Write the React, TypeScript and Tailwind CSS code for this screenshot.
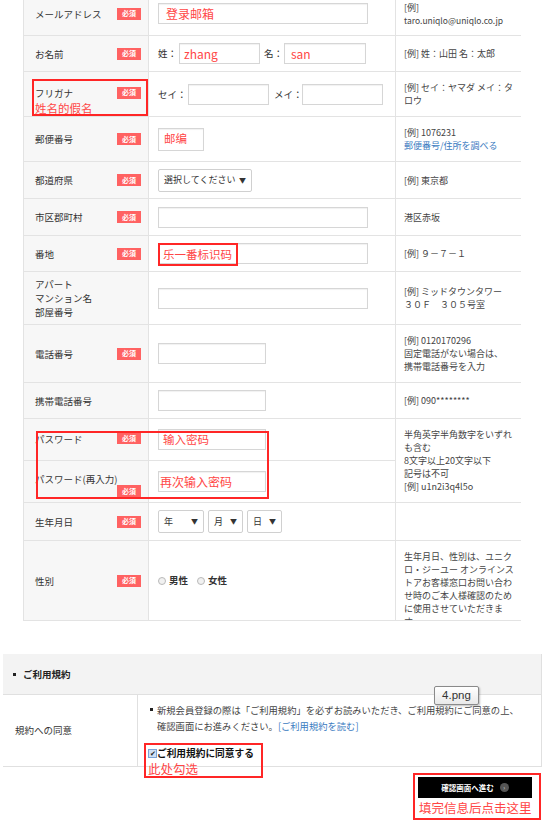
import React from "react";

const JP = { fontFamily: '"Noto Sans CJK JP", "Noto Sans", sans-serif' };

function Badge() {
  return (
    <span className="inline-flex h-[12px] w-[24px] shrink-0 items-center justify-center bg-[#ff6262] text-[7px] font-bold leading-none text-white">
      必須
    </span>
  );
}

function Input({ w, h = "h-[21px]", children }: { w: string; h?: string; children?: React.ReactNode }) {
  return (
    <div className={`${w} ${h} relative flex shrink-0 items-center border border-[#d6d6d6] bg-white shadow-[inset_0_1px_1px_rgba(0,0,0,0.06)]`}>
      {children}
    </div>
  );
}

function Select({ w, label }: { w: string; label: string }) {
  return (
    <div className={`${w} flex h-[23px] items-center justify-between rounded-[2px] border border-[#d0d0d0] bg-white pl-[5px] pr-[5px] text-[9px] text-[#333]`}>
      <span className="whitespace-nowrap">{label}</span>
      <span className="text-[7px]">▼</span>
    </div>
  );
}

function RedText({ children, cls = "" }: { children: React.ReactNode; cls?: string }) {
  return (
    <span className={`whitespace-nowrap text-[11.5px] leading-none text-[#ff4646] ${cls}`} style={{ fontFamily: '"Noto Sans CJK SC", sans-serif' }}>
      {children}
    </span>
  );
}

function LabelCell({ children, badge = true }: { children: React.ReactNode; badge?: boolean }) {
  return (
    <div className="flex w-[125px] shrink-0 items-center justify-between border-r border-[#e3e3e3] bg-[#f7f7f7] pl-[11px] pr-[7px]">
      <span className="leading-[14px]">{children}</span>
      {badge && <Badge />}
    </div>
  );
}

function InputCell({ children }: { children?: React.ReactNode }) {
  return <div className="flex w-[247px] shrink-0 items-center border-r border-[#e3e3e3] pl-[9px]">{children}</div>;
}

function ExCell({ children, cls = "justify-center" }: { children?: React.ReactNode; cls?: string }) {
  return <div className={`flex flex-1 flex-col pl-[8px] pr-1 text-[9px] leading-[13px] text-[#444] ${cls}`}>{children}</div>;
}

export default function App() {
  return (
    <div className="relative h-[825px] w-[546px] overflow-hidden bg-white text-[9.5px] text-[#333]" style={JP}>
      {/* main table */}
      <div className="ml-[23px] mt-[-8px] w-[498px] border-l border-[#e3e3e3]">
        {/* mail */}
        <div className="flex h-[44px] border-b border-[#e3e3e3]">
          <LabelCell>メールアドレス</LabelCell>
          <InputCell>
            <Input w="w-[210px]">
              <RedText cls="pl-[7px] text-[12px]">登录邮箱</RedText>
            </Input>
          </InputCell>
          <ExCell>
            <span>[例]</span>
            <span className="text-[8.5px]">taro.uniqlo@uniqlo.co.jp</span>
          </ExCell>
        </div>
        {/* name */}
        <div className="flex h-[36px] border-b border-[#e3e3e3]">
          <LabelCell>お名前</LabelCell>
          <InputCell>
            <span className="w-[21px] shrink-0 whitespace-nowrap">姓：</span>
            <Input w="w-[81px]">
              <RedText cls="pl-[4px] text-[12px]">zhang</RedText>
            </Input>
            <span className="ml-[4px] w-[20px] shrink-0 whitespace-nowrap">名：</span>
            <Input w="w-[82px]">
              <RedText cls="pl-[6px] text-[12px]">san</RedText>
            </Input>
          </InputCell>
          <ExCell>
            <span>[例] 姓：山田 名：太郎</span>
          </ExCell>
        </div>
        {/* furigana */}
        <div className="flex h-[45px] border-b border-[#e3e3e3]">
          <div className="relative flex w-[125px] shrink-0 flex-col border-r border-[#e3e3e3] bg-[#f7f7f7] pl-[11px] pr-[7px] pt-[13px]">
            <div className="flex items-center justify-between">
              <span className="mt-[2px] leading-[13px]">フリガナ</span>
              <Badge />
            </div>
            <RedText cls="mt-[3px]">姓名的假名</RedText>
            <div className="absolute bottom-0 left-[8px] right-0 top-[7px] border-2 border-[#ff2626]" />
          </div>
          <InputCell>
            <span className="w-[30px] shrink-0 whitespace-nowrap">セイ：</span>
            <Input w="w-[81px]" />
            <span className="ml-[5px] w-[28px] shrink-0 whitespace-nowrap">メイ：</span>
            <Input w="w-[81px]" />
          </InputCell>
          <ExCell>
            <span>[例] セイ：ヤマダ メイ：タ</span>
            <span>ロウ</span>
          </ExCell>
        </div>
        {/* postal */}
        <div className="flex h-[45px] border-b border-[#e3e3e3]">
          <LabelCell>郵便番号</LabelCell>
          <InputCell>
            <Input w="w-[46px]" h="h-[23px]">
              <RedText cls="pl-[5px]">邮编</RedText>
            </Input>
          </InputCell>
          <ExCell>
            <span>[例] 1076231</span>
            <span className="text-[#3a7bbf]">郵便番号/住所を調べる</span>
          </ExCell>
        </div>
        {/* prefecture */}
        <div className="flex h-[37px] border-b border-[#e3e3e3]">
          <LabelCell>都道府県</LabelCell>
          <InputCell>
            <Select w="w-[94px]" label="選択してください" />
          </InputCell>
          <ExCell>
            <span>[例] 東京都</span>
          </ExCell>
        </div>
        {/* city */}
        <div className="flex h-[37px] border-b border-[#e3e3e3]">
          <LabelCell>市区郡町村</LabelCell>
          <InputCell>
            <Input w="w-[210px]" h="h-[21px]" />
          </InputCell>
          <ExCell>
            <span>港区赤坂</span>
          </ExCell>
        </div>
        {/* banchi */}
        <div className="flex h-[36px] border-b border-[#e3e3e3]">
          <LabelCell>番地</LabelCell>
          <InputCell>
            <Input w="w-[210px]">
              <div className="absolute -left-px -top-px flex h-[23px] w-[80px] items-center border-2 border-[#ff2626] pl-[3px]">
                <RedText>乐一番标识码</RedText>
              </div>
            </Input>
          </InputCell>
          <ExCell>
            <span>[例] ９－７－１</span>
          </ExCell>
        </div>
        {/* apartment */}
        <div className="flex h-[53px] border-b border-[#e3e3e3]">
          <LabelCell badge={false}>
            <span className="block">アパート</span>
            <span className="block">マンション名</span>
            <span className="block">部屋番号</span>
          </LabelCell>
          <InputCell>
            <Input w="w-[210px]" />
          </InputCell>
          <ExCell>
            <span>[例] ミッドタウンタワー</span>
            <span>３０Ｆ　３０５号室</span>
          </ExCell>
        </div>
        {/* phone */}
        <div className="flex h-[58px] border-b border-[#e3e3e3]">
          <LabelCell>電話番号</LabelCell>
          <InputCell>
            <Input w="w-[108px]" />
          </InputCell>
          <ExCell>
            <span>[例] 0120170296</span>
            <span>固定電話がない場合は、</span>
            <span>携帯電話番号を入力</span>
          </ExCell>
        </div>
        {/* mobile */}
        <div className="flex h-[36px] border-b border-[#e3e3e3]">
          <LabelCell badge={false}>携帯電話番号</LabelCell>
          <InputCell>
            <Input w="w-[108px]" />
          </InputCell>
          <ExCell>
            <span>[例] 090********</span>
          </ExCell>
        </div>
        {/* password rows */}
        <div className="relative flex h-[84px] border-b border-[#e3e3e3]">
          <div className="flex w-[372px] shrink-0 flex-col">
            <div className="flex h-[42px] border-b border-[#e3e3e3]">
              <div className="flex w-[125px] shrink-0 items-start justify-between border-r border-[#e3e3e3] bg-[#f7f7f7] pl-[11px] pr-[7px] pt-[13px]">
                <span className="leading-[14px]">パスワード</span>
                <Badge />
              </div>
              <InputCell>
                <Input w="w-[108px]">
                  <RedText cls="pl-[4px]">输入密码</RedText>
                </Input>
              </InputCell>
            </div>
            <div className="flex h-[41px]">
              <div className="flex w-[125px] shrink-0 flex-col border-r border-[#e3e3e3] bg-[#f7f7f7] pl-[11px] pr-[7px] pt-[11px]">
                <span className="leading-[14px]">パスワード(再入力)</span>
                <div className="mt-[-1px] flex justify-end">
                  <Badge />
                </div>
              </div>
              <InputCell>
                <Input w="w-[108px]">
                  <RedText cls="pl-px text-[12px]">再次输入密码</RedText>
                </Input>
              </InputCell>
            </div>
          </div>
          <ExCell cls="justify-center leading-[12.8px]">
            <span>半角英字半角数字をいずれ</span>
            <span>も含む</span>
            <span>8文字以上20文字以下</span>
            <span>記号は不可</span>
            <span>[例] u1n2i3q4l5o</span>
          </ExCell>
          <div className="absolute left-[12px] top-[12px] h-[68px] w-[233px] border-2 border-[#ff2626]" />
        </div>
        {/* birth */}
        <div className="flex h-[38px] border-b border-[#e3e3e3]">
          <LabelCell>生年月日</LabelCell>
          <InputCell>
            <div className="flex gap-[4px]">
              <Select w="w-[46px]" label="年" />
              <Select w="w-[35px]" label="月" />
              <Select w="w-[35px]" label="日" />
            </div>
          </InputCell>
          <ExCell />
        </div>
        {/* gender */}
        <div className="flex h-[80px] border-b border-[#e3e3e3]">
          <LabelCell>性別</LabelCell>
          <InputCell>
            <div className="flex items-center">
              <span className="h-[8px] w-[8px] rounded-full border border-[#b9b9b9] bg-[#f1f1f1]" />
              <span className="ml-[3px] font-bold text-[#333]">男性</span>
              <span className="ml-[9px] h-[8px] w-[8px] rounded-full border border-[#b9b9b9] bg-[#f1f1f1]" />
              <span className="ml-[3px] font-bold text-[#333]">女性</span>
            </div>
          </InputCell>
          <ExCell cls="justify-start overflow-hidden pt-[9px] leading-[12.6px]">
            <span>生年月日、性別は、ユニク</span>
            <span>ロ・ジーユー オンラインス</span>
            <span>トアお客様窓口お問い合わ</span>
            <span>せ時のご本人様確認のため</span>
            <span>に使用させていただきま</span>
            <span>す。</span>
          </ExCell>
        </div>
      </div>

      {/* terms section */}
      <div className="relative ml-[3px] mt-[33px] w-[539px]">
        <div className="flex h-[41px] items-center border-b border-r border-[#e0e0e0] bg-[#f3f3f3] pl-[10px]">
          <span className="h-[3px] w-[3px] bg-[#222]" />
          <span className="ml-[7px] text-[9.5px] font-bold text-[#222]">ご利用規約</span>
        </div>
        <div className="flex h-[72px] border-b border-r border-[#e0e0e0]">
          <div className="flex w-[135px] shrink-0 items-center border-r border-[#e0e0e0] pl-[12px] text-[9.5px]">
            規約への同意
          </div>
          <div className="flex flex-col pl-[12px] pt-[7px] text-[9.3px] leading-[16px] text-[#444]">
            <div className="flex items-start">
              <span className="mt-[6px] h-[3px] w-[3px] shrink-0 bg-[#222]" />
              <span className="ml-[4px] whitespace-nowrap">
                新規会員登録の際は「ご利用規約」を必ずお読みいただき、ご利用規約にご同意の上、
                <br />
                確認画面にお進みください。<span className="text-[#3a7bbf]">[ご利用規約を読む]</span>
              </span>
            </div>
            <div className="ml-[-6px] mt-[9px] flex h-[39px] w-[119px] flex-col border-2 border-[#ff2626] pl-[2px] pt-[1px]">
              <div className="flex items-center">
                <span className="flex h-[9px] w-[9px] items-center justify-center border border-[#7aa3d6] bg-[#cfe0f5] text-[7px] leading-none text-[#222]">
                  ✔
                </span>
                <span className="text-[9.7px] font-bold leading-[14px] text-[#111]">ご利用規約に同意する</span>
              </div>
              <RedText cls="mt-[3px] text-[12.5px]">此处勾选</RedText>
            </div>
          </div>
        </div>
        {/* tooltip */}
        <div className="absolute left-[431px] top-[32px] flex h-[19px] w-[45px] items-center justify-center rounded-[2px] border border-[#8a8a8a] bg-gradient-to-b from-[#ffffff] to-[#e9e9e9] text-[11.5px] text-[#333] shadow-[1px_1px_2px_rgba(0,0,0,0.25)]" style={{ fontFamily: '"Liberation Sans", sans-serif' }}>
          4.png
        </div>
      </div>

      {/* button */}
      <div className="mr-[5px] mt-[6px] flex justify-end">
        <div className="flex h-[47px] w-[128px] flex-col border-2 border-[#ff2626] pl-[3px] pt-[2px]">
          <div className="flex h-[21px] w-[114px] items-center justify-center bg-black">
            <span className="text-[7.5px] font-bold text-white">確認画面へ進む</span>
            <span className="ml-[6px] flex h-[9px] w-[9px] items-center justify-center rounded-full bg-[#555] text-[6px] leading-none text-[#ddd]">›</span>
          </div>
          <RedText cls="mt-[4px] pl-px text-[12.5px]">填完信息后点击这里</RedText>
        </div>
      </div>
    </div>
  );
}
